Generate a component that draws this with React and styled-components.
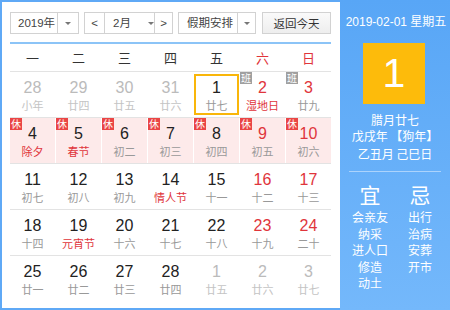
import React from "react";
import styled, { createGlobalStyle } from "styled-components";

const Global = createGlobalStyle`
  html, body { margin: 0; padding: 0; background: #fff; }
  body { font-family: "Liberation Sans", "Noto Sans CJK SC", sans-serif; }
  * { box-sizing: border-box; }
`;

const Frame = styled.div`
  width: 450px;
  height: 310px;
  border: 2px solid #5fa9f6;
  display: flex;
  background: #fff;
`;

const Main = styled.div`
  width: 338px;
  padding: 10px 7px 0 8px;
  display: flex;
  flex-direction: column;
`;

const Toolbar = styled.div`
  display: flex;
  align-items: center;
  height: 22px;
  padding-bottom: 8px;
  box-sizing: content-box;
  border-bottom: 2px solid #8cc4f7;
  width: 321px;
`;

const Group = styled.div`
  display: flex;
  height: 22px;
  border: 1px solid #d2d2d2;
  margin-right: ${(p) => p.$mr || 0}px;
  font-size: 11.5px;
  color: #333;
`;

const Part = styled.div`
  width: ${(p) => p.$w}px;
  flex: none;
  display: flex;
  align-items: center;
  justify-content: ${(p) => (p.$left ? "flex-start" : "center")};
  padding-left: ${(p) => p.$pl || 0}px;
  border-left: ${(p) => (p.$divider ? "1px solid #d2d2d2" : "none")};
  line-height: 20px;
  white-space: nowrap;
  color: #444;
`;

const Caret = styled.span`
  width: 0;
  height: 0;
  border-left: 3px solid transparent;
  border-right: 3px solid transparent;
  border-top: 3px solid #777;
  margin-left: ${(p) => p.$ml || 0}px;
`;

const Button = styled.div`
  margin-left: auto;
  width: 69px;
  height: 22px;
  border: 1px solid #d2d2d2;
  background: linear-gradient(#fafafa, #eeeeee);
  font-size: 11.5px;
  color: #333;
  display: flex;
  align-items: center;
  justify-content: center;
  white-space: nowrap;
`;

const WeekRow = styled.div`
  display: grid;
  grid-template-columns: repeat(7, 45px);
  column-gap: 1px;
  height: 28px;
  border-bottom: 1px solid #e3e3e3;
  width: 321px;
`;

const WeekDay = styled.div`
  display: flex;
  align-items: center;
  justify-content: center;
  font-size: 13px;
  color: ${(p) => (p.$red ? "#e0353b" : "#333")};
`;

const Row = styled.div`
  display: grid;
  grid-template-columns: repeat(7, 45px);
  column-gap: 1px;
  height: 46px;
  width: 321px;
  border-bottom: ${(p) => (p.$last ? "none" : "1px solid #e3e3e3")};
`;

const Cell = styled.div`
  position: relative;
  background: ${(p) => (p.$rest ? "#fdeaea" : "#fff")};
  display: flex;
  flex-direction: column;
  align-items: center;
  margin: ${(p) => (p.$sel ? "2px 0" : "0")};
  border: ${(p) => (p.$sel ? "2px solid #f9b60a" : "none")};
  padding-top: ${(p) => (p.$sel ? "3px" : "7px")};
`;

const Num = styled.div`
  font-size: 16px;
  line-height: 18px;
  color: ${(p) => (p.$dim ? "#bbb" : p.$red ? "#e0353b" : "#222")};
`;

const Lunar = styled.div`
  font-size: 11px;
  line-height: 14px;
  margin-top: 1px;
  color: ${(p) => (p.$dim ? "#c4c4c4" : p.$red ? "#e0353b" : "#999")};
  font-family: "Noto Sans CJK SC", sans-serif;
`;

const Badge = styled.span`
  position: absolute;
  left: 0;
  top: 0;
  width: 12px;
  height: 12px;
  font-size: 10px;
  line-height: 12px;
  text-align: center;
  color: #fff;
  background: ${(p) => (p.$work ? "#a0a0a0" : "#ea4545")};
  font-family: "Noto Sans CJK SC", sans-serif;
`;

const Side = styled.div`
  flex: 1;
  background: linear-gradient(#58a6f6, #74b8fb);
  color: #fff;
  display: flex;
  flex-direction: column;
  align-items: center;
  padding-top: 14px;
  margin: -2px -2px -2px 0;
`;

const DateLine = styled.div`
  font-size: 12px;
  line-height: 16px;
  padding-left: 2px;
`;

const DayBox = styled.div`
  width: 62px;
  height: 61px;
  margin-top: 13px;
  background: #fdbb0b;
  display: flex;
  align-items: center;
  justify-content: center;
  font-size: 41px;
  font-family: "Liberation Sans", sans-serif;
  margin-right: 2px;
`;

const LunarInfo = styled.div`
  margin-top: 8px;
  font-size: 12px;
  line-height: 16px;
  text-align: center;
  font-family: "Noto Sans CJK SC", sans-serif;
`;

const InfoLine = styled.div`
  margin-top: ${(p) => p.$mt || 0}px;
`;

const Divider = styled.div`
  width: 92px;
  height: 1px;
  background: rgba(255, 255, 255, 0.45);
  margin-top: 9px;
`;

const Lists = styled.div`
  display: flex;
  gap: 13px;
  margin-top: 10px;
  font-family: "Noto Sans CJK SC", sans-serif;
`;

const ListCol = styled.div`
  width: 37px;
  display: flex;
  flex-direction: column;
  align-items: center;
`;

const Big = styled.div`
  font-size: 21px;
  line-height: 24px;
  margin-bottom: 3px;
`;

const Item = styled.div`
  font-size: 12px;
  line-height: 16.5px;
  white-space: nowrap;
`;

const rows = [
  [
    { n: 28, l: "小年", dim: true },
    { n: 29, l: "廿四", dim: true },
    { n: 30, l: "廿五", dim: true },
    { n: 31, l: "廿六", dim: true },
    { n: 1, l: "廿七", sel: true },
    { n: 2, l: "湿地日", red: true, lred: true, badge: "班" },
    { n: 3, l: "廿九", red: true, badge: "班" },
  ],
  [
    { n: 4, l: "除夕", lred: true, rest: true, badge: "休" },
    { n: 5, l: "春节", lred: true, rest: true, badge: "休" },
    { n: 6, l: "初二", rest: true, badge: "休" },
    { n: 7, l: "初三", rest: true, badge: "休" },
    { n: 8, l: "初四", rest: true, badge: "休" },
    { n: 9, l: "初五", red: true, rest: true, badge: "休" },
    { n: 10, l: "初六", red: true, rest: true, badge: "休" },
  ],
  [
    { n: 11, l: "初七" },
    { n: 12, l: "初八" },
    { n: 13, l: "初九" },
    { n: 14, l: "情人节", lred: true },
    { n: 15, l: "十一" },
    { n: 16, l: "十二", red: true },
    { n: 17, l: "十三", red: true },
  ],
  [
    { n: 18, l: "十四" },
    { n: 19, l: "元宵节", lred: true },
    { n: 20, l: "十六" },
    { n: 21, l: "十七" },
    { n: 22, l: "十八" },
    { n: 23, l: "十九", red: true },
    { n: 24, l: "二十", red: true },
  ],
  [
    { n: 25, l: "廿一" },
    { n: 26, l: "廿二" },
    { n: 27, l: "廿三" },
    { n: 28, l: "廿四" },
    { n: 1, l: "廿五", dim: true },
    { n: 2, l: "廿六", dim: true },
    { n: 3, l: "廿七", dim: true },
  ],
];

const weekdays = ["一", "二", "三", "四", "五", "六", "日"];

export default function App() {
  return (
    <>
      <Global />
      <Frame>
        <Main>
          <Toolbar>
            <Group $mr={5}>
              <Part $w={46} $left $pl={7}>2019年</Part>
              <Part $w={21} $divider><Caret /></Part>
            </Group>
            <Group $mr={5}>
              <Part $w={19}>&lt;</Part>
              <Part $w={50} $divider $left $pl={8}>
                2月<Caret $ml={17} />
              </Part>
              <Part $w={18} $divider>&gt;</Part>
            </Group>
            <Group>
              <Part $w={58} $left $pl={8}>假期安排</Part>
              <Part $w={18} $divider><Caret /></Part>
            </Group>
            <Button>返回今天</Button>
          </Toolbar>
          <WeekRow>
            {weekdays.map((w, i) => (
              <WeekDay key={w} $red={i >= 5}>{w}</WeekDay>
            ))}
          </WeekRow>
          {rows.map((r, ri) => (
            <Row key={ri} $last={ri === rows.length - 1}>
              {r.map((c, ci) => (
                <Cell key={ci} $rest={c.rest} $sel={c.sel}>
                  {c.badge && <Badge $work={c.badge === "班"}>{c.badge}</Badge>}
                  <Num $dim={c.dim} $red={c.red}>{c.n}</Num>
                  <Lunar $dim={c.dim} $red={c.lred}>{c.l}</Lunar>
                </Cell>
              ))}
            </Row>
          ))}
        </Main>
        <Side>
          <DateLine>2019-02-01 星期五</DateLine>
          <DayBox>1</DayBox>
          <LunarInfo>
            <InfoLine>腊月廿七</InfoLine>
            <InfoLine>戊戌年 【狗年】</InfoLine>
            <InfoLine $mt={2}>乙丑月 己巳日</InfoLine>
          </LunarInfo>
          <Divider />
          <Lists>
            <ListCol>
              <Big>宜</Big>
              <Item>会亲友</Item>
              <Item>纳采</Item>
              <Item>进人口</Item>
              <Item>修造</Item>
              <Item>动土</Item>
            </ListCol>
            <ListCol>
              <Big>忌</Big>
              <Item>出行</Item>
              <Item>治病</Item>
              <Item>安葬</Item>
              <Item>开市</Item>
            </ListCol>
          </Lists>
        </Side>
      </Frame>
    </>
  );
}
